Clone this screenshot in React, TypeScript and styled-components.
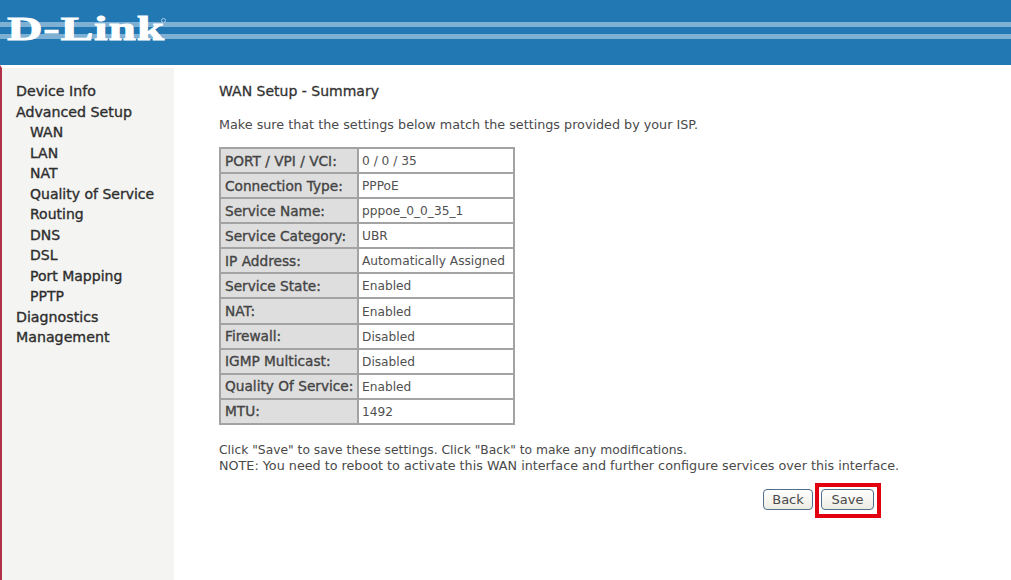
import { createGlobalStyle } from 'styled-components';
import styled from 'styled-components';

const GlobalStyle = createGlobalStyle`
  html, body {
    margin: 0;
    padding: 0;
    background: #ffffff;
    overflow: hidden;
  }
`;

const Page = styled.div`
  width: 1011px;
  height: 580px;
  display: flex;
  flex-direction: column;
  font-family: 'DejaVu Sans', Verdana, sans-serif;
  color: #4a4a4a;
`;

const Header = styled.header`
  height: 65px;
  flex: none;
  background: #2178b3;
  display: flex;
  flex-direction: column;
  position: relative;
`;

const Stripe = styled.div<{ $top: number }>`
  height: 5px;
  margin-top: ${(p) => p.$top}px;
  background: #7db0d3;
`;

const Logo = styled.div`
  position: absolute;
  left: 7px;
  top: 9px;
  font-family: 'Liberation Serif', 'Times New Roman', serif;
  font-weight: 700;
  font-size: 34px;
  line-height: 40px;
  color: #ffffff;
  letter-spacing: 0.5px;
  transform: scaleX(1.45);
  transform-origin: left center;
  -webkit-text-stroke: 0.8px #ffffff;
  white-space: nowrap;
`;

const Reg = styled.span`
  position: absolute;
  left: 161px;
  top: 18px;
  width: 3px;
  height: 3px;
  border: 1px solid #a9cbe2;
  border-radius: 50%;
`;

const Body = styled.div`
  flex: 1;
  display: flex;
`;

const Sidebar = styled.nav`
  flex: none;
  box-sizing: content-box;
  width: 158px;
  border-left: 2px solid #b0324a;
  border-top: 3px solid #ffffff;
  background: #f4f4f2;
  padding: 13px 0 0 14px;
`;

const MenuItem = styled.div<{ $sub?: boolean }>`
  height: 20.5px;
  line-height: 20.5px;
  font-size: ${(p) => (p.$sub ? 14 : 14.2)}px;
  font-weight: 500;
  color: #2e2e2e;
  padding-left: ${(p) => (p.$sub ? 14 : 0)}px;
  white-space: nowrap;
  -webkit-text-stroke: 0.35px #2e2e2e;
`;

const Main = styled.main`
  flex: 1;
  padding: 18px 0 0 45px;
`;

const Title = styled.div`
  font-size: 14px;
  line-height: 17px;
  font-weight: 500;
  color: #333333;
  -webkit-text-stroke: 0.3px #333333;
  white-space: nowrap;
`;

const Intro = styled.div`
  margin-top: 16px;
  font-size: 12.75px;
  line-height: 17px;
  white-space: nowrap;
`;

const SummaryTable = styled.table`
  margin-top: 14px;
  border-collapse: collapse;
  width: 296px;
  height: 278px;
  table-layout: fixed;
  border: 2px solid #a3a3a3;
`;

const LabelCell = styled.td`
  width: 132px;
  padding: 0 0 0 4px;
  background: #dedede;
  border: 2px solid #a3a3a3;
  font-size: 13.7px;
  font-weight: 500;
  color: #444444;
  white-space: nowrap;
  -webkit-text-stroke: 0.35px #444444;
`;

const ValueCell = styled.td`
  padding: 1px 0 0 3px;
  background: #ffffff;
  border: 2px solid #a3a3a3;
  font-size: 12.2px;
  color: #505050;
  white-space: nowrap;
`;

const Notes = styled.div`
  margin-top: 18px;
  white-space: nowrap;
`;

const NoteLine = styled.div<{ $size: number }>`
  font-size: ${(p) => p.$size}px;
  line-height: 15px;
`;

const Actions = styled.div`
  margin-top: 10px;
  margin-left: 544px;
  display: flex;
  align-items: flex-start;
  gap: 2px;
`;

const Highlight = styled.div`
  box-sizing: border-box;
  width: 66px;
  height: 35px;
  border: 4px solid #e2000f;
  padding: 2px 0 0 2px;
`;

const Button = styled.button<{ $wide?: boolean }>`
  display: block;
  width: ${(p) => (p.$wide ? 53 : 50)}px;
  height: 21px;
  margin-top: ${(p) => (p.$wide ? 0 : 6)}px;
  padding: 0;
  box-sizing: border-box;
  border: 1.5px solid #4f6f8c;
  border-radius: 4px;
  background: linear-gradient(#ffffff, #ecebe2);
  font-family: 'DejaVu Sans', Verdana, sans-serif;
  font-size: 13px;
  color: #4a4a4a;
`;

const menu: { label: string; sub?: boolean }[] = [
  { label: 'Device Info' },
  { label: 'Advanced Setup' },
  { label: 'WAN', sub: true },
  { label: 'LAN', sub: true },
  { label: 'NAT', sub: true },
  { label: 'Quality of Service', sub: true },
  { label: 'Routing', sub: true },
  { label: 'DNS', sub: true },
  { label: 'DSL', sub: true },
  { label: 'Port Mapping', sub: true },
  { label: 'PPTP', sub: true },
  { label: 'Diagnostics' },
  { label: 'Management' },
];

const rows = [
  ['PORT / VPI / VCI:', '0 / 0 / 35'],
  ['Connection Type:', 'PPPoE'],
  ['Service Name:', 'pppoe_0_0_35_1'],
  ['Service Category:', 'UBR'],
  ['IP Address:', 'Automatically Assigned'],
  ['Service State:', 'Enabled'],
  ['NAT:', 'Enabled'],
  ['Firewall:', 'Disabled'],
  ['IGMP Multicast:', 'Disabled'],
  ['Quality Of Service:', 'Enabled'],
  ['MTU:', '1492'],
];

const App = () => {
  return (
    <Page>
      <GlobalStyle />
      <Header>
        <Stripe $top={22} />
        <Stripe $top={7} />
        <Logo>D-Link</Logo>
        <Reg />
      </Header>
      <Body>
        <Sidebar>
          {menu.map((el) => (
            <MenuItem key={el.label} $sub={el.sub}>
              {el.label}
            </MenuItem>
          ))}
        </Sidebar>
        <Main>
          <Title>WAN Setup - Summary</Title>
          <Intro>Make sure that the settings below match the settings provided by your ISP.</Intro>
          <SummaryTable>
            <tbody>
              {rows.map(([label, value]) => (
                <tr key={label}>
                  <LabelCell>{label}</LabelCell>
                  <ValueCell>{value}</ValueCell>
                </tr>
              ))}
            </tbody>
          </SummaryTable>
          <Notes>
            <NoteLine $size={12.3}>Click "Save" to save these settings. Click "Back" to make any modifications.</NoteLine>
            <NoteLine $size={12.75}>
              NOTE: You need to reboot to activate this WAN interface and further configure services over this interface.
            </NoteLine>
          </Notes>
          <Actions>
            <Button>Back</Button>
            <Highlight>
              <Button $wide>Save</Button>
            </Highlight>
          </Actions>
        </Main>
      </Body>
    </Page>
  );
};

export default App;
